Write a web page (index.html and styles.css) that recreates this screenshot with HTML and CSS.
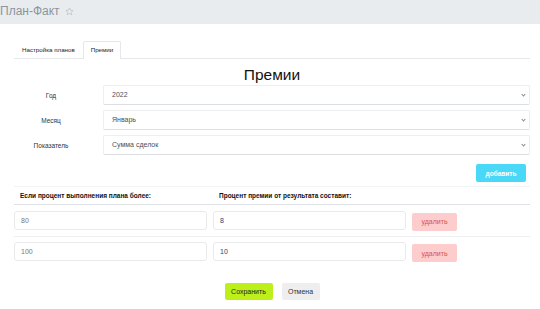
FILE: index.html
```html
<!DOCTYPE html>
<html lang="ru">
<head>
    <meta charset="UTF-8">
    <title>План-Факт</title>
    <link rel="stylesheet" href="styles.css">
</head>
<body>
    <div class="topbar">
        <span class="page-title">План-Факт</span>
        <svg class="star" width="9" height="9" viewBox="0 0 24 24"><path d="M12 2.5l2.9 6.1 6.6.8-4.9 4.6 1.3 6.6L12 17.3l-5.9 3.3 1.3-6.6-4.9-4.6 6.6-.8z" fill="none" stroke="#b8bec4" stroke-width="1.8" stroke-linejoin="round"/></svg>
    </div>

    <div class="container">
        <ul class="tabs">
            <li class="tab">Настройка планов</li>
            <li class="tab active">Премии</li>
        </ul>

        <h2>Премии</h2>

        <div class="form-row">
            <label>Год</label>
            <div class="select">2022</div>
        </div>
        <div class="form-row">
            <label>Месяц</label>
            <div class="select">Январь</div>
        </div>
        <div class="form-row">
            <label>Показатель</label>
            <div class="select">Сумма сделок</div>
        </div>

        <div class="add-row">
            <button class="btn btn-add">добавить</button>
        </div>

        <div class="table">
            <div class="t-row t-head">
                <div>Если процент выполнения плана более:</div>
                <div>Процент премии от результата составит:</div>
                <div></div>
            </div>
            <div class="t-row">
                <div class="input">80</div>
                <div class="input">8</div>
                <div><button class="btn btn-del">удалить</button></div>
            </div>
            <div class="t-row">
                <div class="input">100</div>
                <div class="input">10</div>
                <div><button class="btn btn-del">удалить</button></div>
            </div>
        </div>

        <div class="actions">
            <button class="btn btn-save">Сохранить</button>
            <button class="btn btn-cancel">Отмена</button>
        </div>
    </div>
</body>
</html>
```

FILE: styles.css
```css
body {
    margin: 0;
    font-family: "Liberation Sans", Arial, sans-serif;
    background-color: #fff;
    color: #212529;
}

.topbar {
    height: 24px;
    background-color: #e9ecef;
    display: flex;
    align-items: center;
    gap: 5px;
}

.page-title {
    font-size: 12px;
    color: #8c959d;
    margin-top: -2px;
}

.star {
    margin-top: -2px;
}

.container {
    padding: 17px 10px 0 14px;
}

.tabs {
    list-style: none;
    margin: 0;
    padding: 0;
    display: flex;
    border-bottom: 1px solid #e5e8eb;
    height: 17px;
}

.tab {
    font-size: 6.2px;
    padding: 0 7px;
    line-height: 16px;
    border: 1px solid transparent;
    border-bottom: none;
    border-radius: 2px 2px 0 0;
}

.tab.active {
    border-color: #e5e8eb;
    background-color: #fff;
    height: 17px;
}

h2 {
    font-size: 15.5px;
    font-weight: normal;
    text-align: center;
    margin: 7px 0 1px 0;
    line-height: 18px;
    color: #111;
}

.form-row {
    display: flex;
    align-items: center;
    margin-bottom: 5px;
}

.form-row label {
    width: 74px;
    text-align: center;
    font-size: 6.5px;
    color: #333;
    margin-right: 15px;
}

.select {
    flex: 1;
    height: 18px;
    border: 1px solid #eceef0;
    border-bottom-color: #dcdfe2;
    border-radius: 2px;
    font-size: 7px;
    line-height: 18px;
    padding-left: 8px;
    color: #495057;
    position: relative;
}

.select::after {
    content: "";
    position: absolute;
    right: 4px;
    top: 7px;
    width: 2px;
    height: 2px;
    border-right: 1px solid #888;
    border-bottom: 1px solid #888;
    transform: rotate(45deg);
}

.add-row {
    display: flex;
    justify-content: flex-end;
    padding: 4px 4px 4px 0;
    border-bottom: 1px solid #f2f3f5;
}

.btn {
    font-family: "Liberation Sans", Arial, sans-serif;
    font-size: 6.5px;
    border: none;
    border-radius: 2px;
    cursor: pointer;
    padding: 0;
}

.btn-add {
    background-color: #49d8f8;
    color: #fff;
    width: 50px;
    height: 18px;
    font-weight: bold;
}

.t-row {
    display: grid;
    grid-template-columns: 193px 193px 1fr;
    gap: 6px;
    align-items: center;
    padding: 5px 0 5px 0;
    border-bottom: 1px solid #eef0f2;
}

.t-head {
    font-size: 6.5px;
    font-weight: bold;
    color: #111;
    padding: 5px 0 5px 6px;
    border-bottom: 1px solid #dee2e6;
}

.input {
    height: 17px;
    border: 1px solid #e8eaec;
    border-radius: 3px;
    font-size: 7px;
    line-height: 17px;
    padding-left: 6px;
    color: #777;
}

.input + .input {
    color: #2a3f6e;
}

.btn-del {
    background-color: #fdcccd;
    color: #d9534f;
    width: 45px;
    height: 18px;
    font-size: 7px;
}

.t-row:last-child {
    border-bottom: none;
}

.actions {
    display: flex;
    justify-content: center;
    gap: 9px;
    margin-top: 16px;
}

.btn-save {
    background-color: #bdf01a;
    color: #222;
    width: 48px;
    height: 17px;
    font-size: 7px;
}

.btn-cancel {
    background-color: #eeeeee;
    color: #333;
    width: 38px;
    height: 17px;
    font-size: 7px;
}
```
